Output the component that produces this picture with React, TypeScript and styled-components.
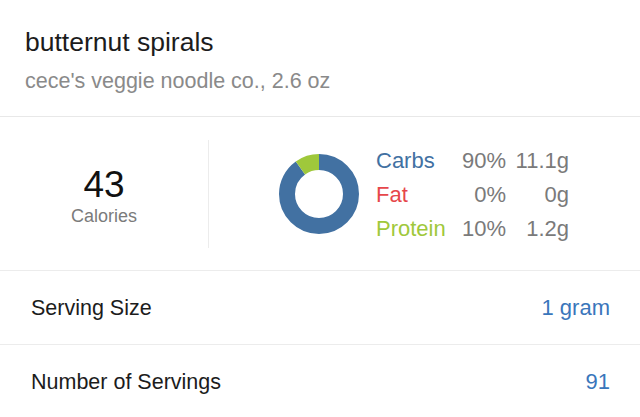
import styled, { createGlobalStyle } from 'styled-components';

const GlobalStyle = createGlobalStyle`
  html, body {
    margin: 0;
    padding: 0;
    background: #ffffff;
  }
  body {
    font-family: 'Liberation Sans', Arial, Helvetica, sans-serif;
    -webkit-font-smoothing: antialiased;
  }
`;

type Macro = {
  label: string;
  color: string;
  percent: number;
  grams: string;
};

const MACROS: Macro[] = [
  { label: 'Carbs', color: '#4271a2', percent: 90, grams: '11.1g' },
  { label: 'Fat', color: '#e6474b', percent: 0, grams: '0g' },
  { label: 'Protein', color: '#9fc83b', percent: 10, grams: '1.2g' },
];

const RADIUS = 32;
const CIRCUMFERENCE = 2 * Math.PI * RADIUS;

const MacroDonut = ({ macros }: { macros: Macro[] }) => {
  let offset = 0;

  return (
    <StyledDonut viewBox='0 0 80 80'>
      <g transform='rotate(-90 40 40)'>
        {macros.map((m) => {
          const length = (m.percent / 100) * CIRCUMFERENCE;
          const arc = (
            <circle
              key={m.label}
              cx='40'
              cy='40'
              r={RADIUS}
              fill='none'
              stroke={m.color}
              strokeWidth='16'
              strokeDasharray={`${length} ${CIRCUMFERENCE}`}
              strokeDashoffset={-offset}
            />
          );
          offset += length;
          return m.percent > 0 ? arc : null;
        })}
      </g>
    </StyledDonut>
  );
};

const DetailRow = ({ label, value }: { label: string; value: string }) => (
  <StyledRow>
    <StyledRowLabel>{label}</StyledRowLabel>
    <StyledRowValue>{value}</StyledRowValue>
  </StyledRow>
);

export default function App() {
  return (
    <>
      <GlobalStyle />
      <StyledPage>
        <StyledHeader>
          <StyledTitle>butternut spirals</StyledTitle>
          <StyledBrand>cece's veggie noodle co., 2.6 oz</StyledBrand>
        </StyledHeader>

        <StyledSummary>
          <StyledCalories>
            <StyledCalorieCount>43</StyledCalorieCount>
            <StyledCalorieLabel>Calories</StyledCalorieLabel>
          </StyledCalories>
          <StyledBreakdown>
            <MacroDonut macros={MACROS} />
            <StyledLegend>
              {MACROS.map((m) => (
                <StyledLegendRow key={m.label}>
                  <StyledMacroName $color={m.color}>{m.label}</StyledMacroName>
                  <StyledMacroValue>{m.percent}%</StyledMacroValue>
                  <StyledMacroValue>{m.grams}</StyledMacroValue>
                </StyledLegendRow>
              ))}
            </StyledLegend>
          </StyledBreakdown>
        </StyledSummary>

        <DetailRow label='Serving Size' value='1 gram' />
        <DetailRow label='Number of Servings' value='91' />
      </StyledPage>
    </>
  );
}

const StyledPage = styled.div`
  width: 640px;
  height: 417px;
  overflow: hidden;
  background: #ffffff;
`;

const StyledHeader = styled.header`
  box-sizing: border-box;
  height: 117px;
  padding: 27px 25px 0;
  border-bottom: 1px solid #e8e8e8;
`;

const StyledTitle = styled.h1`
  margin: 0;
  font-size: 26.5px;
  line-height: 30px;
  font-weight: 400;
  color: #1c1c1c;
`;

const StyledBrand = styled.div`
  margin-top: 12px;
  font-size: 21.5px;
  line-height: 24px;
  color: #8a8a8a;
`;

const StyledSummary = styled.section`
  box-sizing: border-box;
  height: 154px;
  display: flex;
  align-items: center;
  border-bottom: 1px solid #ececec;
`;

const StyledCalories = styled.div`
  box-sizing: border-box;
  width: 209px;
  height: 108px;
  padding-top: 3px;
  display: flex;
  flex-direction: column;
  align-items: center;
  justify-content: center;
  border-right: 1px solid #ececec;
`;

const StyledCalorieCount = styled.div`
  font-size: 37px;
  line-height: 40px;
  color: #111111;
`;

const StyledCalorieLabel = styled.div`
  margin-top: 1px;
  font-size: 18px;
  line-height: 20px;
  color: #7b7b7b;
`;

const StyledBreakdown = styled.div`
  flex: 1;
  display: flex;
  align-items: center;
  padding-left: 70px;
  gap: 17px;
`;

const StyledDonut = styled.svg`
  width: 80px;
  height: 80px;
  flex-shrink: 0;
`;

const StyledLegend = styled.div`
  margin-top: 3px;
  display: grid;
  grid-template-columns: 86px 44px 63px;
`;

const StyledLegendRow = styled.div`
  display: contents;
`;

const StyledMacroName = styled.span<{ $color: string }>`
  font-size: 22px;
  line-height: 34px;
  color: ${({ $color }) => $color};
  white-space: nowrap;
`;

const StyledMacroValue = styled.span`
  font-size: 22px;
  line-height: 34px;
  color: #7a7a7a;
  text-align: right;
  white-space: nowrap;
`;

const StyledRow = styled.div`
  box-sizing: border-box;
  height: 74px;
  padding: 25px 30px 0 31px;
  display: flex;
  justify-content: space-between;
  border-bottom: 1px solid #ececec;
`;

const StyledRowLabel = styled.span`
  font-size: 21.5px;
  line-height: 24px;
  color: #1c1c1c;
`;

const StyledRowValue = styled.span`
  font-size: 22px;
  line-height: 24px;
  color: #3a76bb;
`;
